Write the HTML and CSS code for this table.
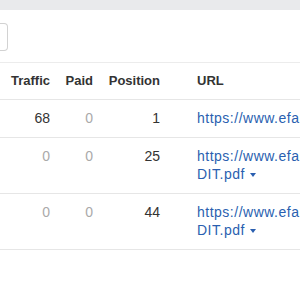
FILE: index.html
```html
<!DOCTYPE html>
<html>
<head>
<meta charset="utf-8">
<link rel="stylesheet" href="styles.css">
</head>
<body>
<div class="page">
  <div class="topband"></div>
  <div class="toolbar">
    <div class="input-edge"></div>
  </div>
  <div class="table">
    <div class="row head">
      <div class="cell num c-traffic">Traffic</div>
      <div class="cell num c-paid">Paid</div>
      <div class="cell num c-pos">Position</div>
      <div class="cell c-url">URL</div>
    </div>
    <div class="row">
      <div class="cell num c-traffic">68</div>
      <div class="cell num c-paid muted">0</div>
      <div class="cell num c-pos">1</div>
      <div class="cell c-url"><a class="link" href="#">https://www.efanniemae.com/sf/refmaterials/loanlimits/</a></div>
    </div>
    <div class="row">
      <div class="cell num c-traffic muted">0</div>
      <div class="cell num c-paid muted">0</div>
      <div class="cell num c-pos">25</div>
      <div class="cell c-url"><a class="link" href="#"><span class="line">https://www.efanniemae.com/sf/refmaterials/loanlimits/pdf/LOANLIMITSAU</span><span class="line">DIT.pdf <span class="caret"></span></span></a></div>
    </div>
    <div class="row">
      <div class="cell num c-traffic muted">0</div>
      <div class="cell num c-paid muted">0</div>
      <div class="cell num c-pos">44</div>
      <div class="cell c-url"><a class="link" href="#"><span class="line">https://www.efanniemae.com/sf/refmaterials/loanlimits/pdf/LOANLIMITSAU</span><span class="line">DIT.pdf <span class="caret"></span></span></a></div>
    </div>
  </div>
</div>
</body>
</html>
```
FILE: styles.css
```css
html, body {
  margin: 0;
  padding: 0;
  background: #fff;
}
body {
  width: 300px;
  height: 300px;
  overflow: hidden;
  font-family: "Liberation Sans", Arial, sans-serif;
  color: #333;
}
.page {
  width: 300px;
}
.topband {
  height: 10px;
  background: #e9eaec;
}
.toolbar {
  height: 52px;
  display: flex;
  align-items: center;
  padding-bottom: 1px;
  box-sizing: border-box;
}
.input-edge {
  width: 7px;
  height: 26px;
  margin-top: 2px;
  border: 1px solid #d2d2d2;
  border-left: none;
  border-radius: 0 4px 4px 0;
  box-sizing: content-box;
}
.table {
  border-top: 1px solid #ececec;
}
.row {
  display: flex;
  border-bottom: 1px solid #e6e6e6;
  padding: 9px 0;
  font-size: 14px;
  line-height: 18.5px;
}
.row.head {
  font-size: 13px;
  font-weight: bold;
  color: #333;
  line-height: 18px;
}
.cell {
  flex: none;
  box-sizing: border-box;
}
.num {
  text-align: right;
}
.c-traffic { width: 50px; }
.c-paid { width: 43px; }
.c-pos { width: 67px; }
.c-url {
  width: 260px;
  padding-left: 37px;
  white-space: nowrap;
  overflow: hidden;
}
.muted {
  color: #aaa;
}
.link {
  color: #2a5fb0;
  text-decoration: none;
  letter-spacing: 0.5px;
}
.line {
  display: block;
}
.caret {
  display: inline-block;
  width: 0;
  height: 0;
  border-left: 3.5px solid transparent;
  border-right: 3.5px solid transparent;
  border-top: 4px solid #2a5fb0;
  vertical-align: middle;
  margin-left: 1px;
}
```
